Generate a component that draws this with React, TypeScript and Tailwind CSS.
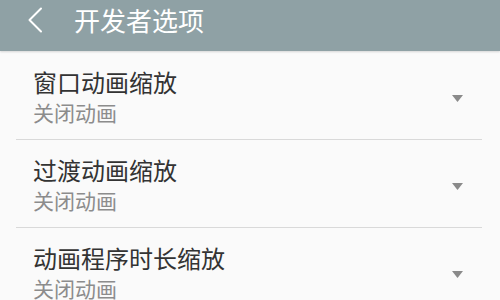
const rows = [
  { title: '窗口动画缩放', value: '关闭动画' },
  { title: '过渡动画缩放', value: '关闭动画' },
  { title: '动画程序时长缩放', value: '关闭动画' },
];

function Caret() {
  return (
    <svg width="11" height="7" viewBox="0 0 11 7" className="shrink-0">
      <path d="M0 0 H11 L5.5 7 Z" fill="#8a8a8a" />
    </svg>
  );
}

export default function App() {
  return (
    <div
      className="w-[500px] h-[300px] overflow-hidden bg-[#fafafa]"
      style={{ fontFamily: '"Noto Sans CJK SC", "Noto Sans", sans-serif' }}
    >
      <header className="h-[51px] bg-[#8fa1a5] flex items-start pt-[5px] shadow-[0_1px_2px_rgba(0,0,0,0.15)] relative">
        <svg width="16" height="26" viewBox="0 0 16 26" className="ml-[27px] mt-[2px] shrink-0">
          <path d="M14 1.5 L2.5 13 L14 24.5" fill="none" stroke="#ffffff" strokeWidth="2" strokeLinecap="round" strokeLinejoin="round" />
        </svg>
        <h1 className="ml-[31px] text-[26px] leading-[30px] text-white">开发者选项</h1>
      </header>

      <div className="pt-px">
        {rows.map((r, i) => (
          <div key={i}>
            <div className="h-[87px] flex items-center pl-[33px] pr-[37px] pt-[16px] pb-[11px]">
              <div className="flex-1 flex flex-col gap-[3px] self-start">
                <div className="text-[24px] leading-[28px] text-[#333333] whitespace-nowrap">{r.title}</div>
                <div className="text-[21px] leading-[26px] text-[#8c8c8c] whitespace-nowrap">{r.value}</div>
              </div>
              <Caret />
            </div>
            <div className="ml-[16px] mr-[18px] h-px bg-[#d9d9d9]" />
          </div>
        ))}
      </div>
    </div>
  );
}
